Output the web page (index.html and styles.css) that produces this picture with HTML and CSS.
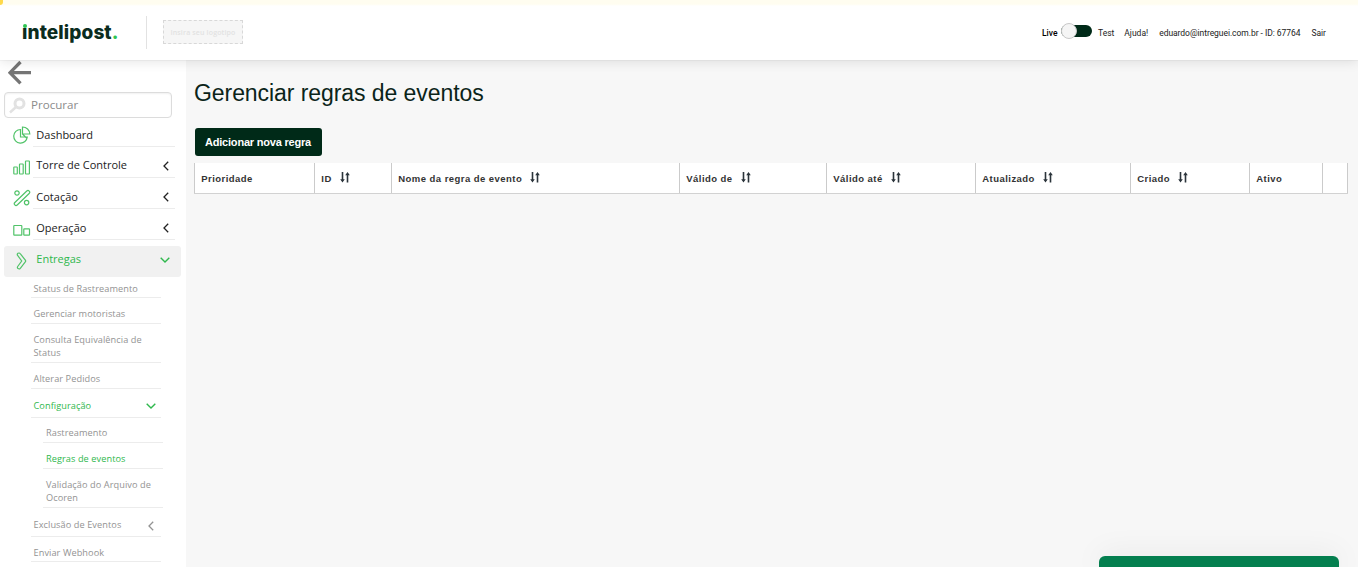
FILE: index.html
```html
<!DOCTYPE html>
<html lang="pt-BR">
<head>
<meta charset="utf-8">
<title>Intelipost - Regras de eventos</title>
<link rel="stylesheet" href="styles.css">
</head>
<body>
<svg class="defs" width="0" height="0">
  <symbol id="sort" viewBox="0 0 10 11"><path d="M2.500 0V8.500M7.500 10.500V2" fill="none" stroke="#2b343b" stroke-width="1.600"/><path d="M.2 7.300H4.800L2.500 10.400ZM5.200 3.200H9.800L7.500 .1Z" fill="#2b343b"/></symbol>
  <symbol id="left" viewBox="0 0 6 10"><path d="M5.200 .8 1 5l4.200 4.200" fill="none" stroke="currentColor" stroke-width="1.300"/></symbol>
  <symbol id="down" viewBox="0 0 10 6"><path d="M.7.7 5 5 9.300.7" fill="none" stroke="currentColor" stroke-width="1.400"/></symbol>
</svg>
<header class="header">
  <div class="logo"><i class="logo-i">ı<b></b></i>ntelipost<span>.</span></div>
  <div class="client-logo">Insira seu logotipo</div>
  <div class="account">
    <strong class="live">Live</strong>
    <div class="switch"><span></span></div>
    <span class="test">Test</span>
    <span class="help">Ajuda!</span>
    <span class="mail">eduardo@intreguei.com.br - ID: 67764</span>
    <span>Sair</span>
  </div>
</header>
<div class="layout">
  <aside class="sidebar">
    <svg class="back" viewBox="0 0 24 26"><path d="M23 12.700H2M12.500 2 2 12.700 12.500 23.400" fill="none" stroke="#757575" stroke-width="3.300"/></svg>
    <div class="search">
      <svg width="18" height="18" viewBox="0 0 18 18" fill="none" stroke="#e2e2e2"><circle cx="10.500" cy="7.500" r="4.500" stroke-width="3"/><path d="m7 11-6 5.500" stroke-width="2.400"/></svg>
      <span>Procurar</span>
    </div>
    <nav>
      <div class="item dash">
        <svg class="ico" viewBox="0 0 18 18"><path d="M7.500 3.500A6.800 6.800 0 1 0 14.300 11H7.500ZM9.500 1v7h7.300A7.200 7.200 0 0 0 9.500 1ZM9.500 8l4 4"/></svg>
        <span class="label">Dashboard</span>
      </div>
      <div class="item torre">
        <svg class="ico" viewBox="0 0 18 18"><rect x=".8" y="9" width="3.500" height="7" rx=".5"/><rect x="6.500" y="6" width="3.700" height="10" rx=".5"/><rect x="12.500" y="3" width="3.900" height="13" rx=".5"/></svg>
        <span class="label">Torre de Controle</span><svg class="left"><use href="#left"/></svg>
      </div>
      <div class="item cot">
        <svg class="ico" viewBox="0 0 18 18"><rect x="-1" y="7.300" width="20" height="3.400" rx="1.700" transform="rotate(-44 9 9)"/><circle cx="4" cy="4" r="2.200"/><circle cx="13.600" cy="13.600" r="2.200"/></svg>
        <span class="label">Cotação</span><svg class="left"><use href="#left"/></svg>
      </div>
      <div class="item oper">
        <svg class="ico" viewBox="0 0 18 18"><rect x=".8" y="4.500" width="8" height="9.700" rx=".5"/><rect x="10.800" y="7.800" width="5.700" height="6.400" rx=".5"/></svg>
        <span class="label">Operação</span><svg class="left"><use href="#left"/></svg>
      </div>
      <div class="item active">
        <svg class="ico" viewBox="0 0 18 18"><path d="M5 1.300c.9-.5 1.800-.3 2.400.5L12.300 8c.5.600.5 1.200 0 1.800l-5 6.500c-.6.700-1.500.8-2.300.3-.7-.6-.8-1.400-.3-2.100L8.700 9 4.600 3.400c-.5-.7-.4-1.500.4-2.100Z"/></svg>
        <span class="label">Entregas</span><svg class="down"><use href="#down"/></svg>
      </div>
      <div class="sub s1"><span>Status de Rastreamento</span></div>
      <div class="sub s2"><span>Gerenciar motoristas</span></div>
      <div class="sub s3"><span>Consulta Equivalência de<br>Status</span></div>
      <div class="sub s4"><span>Alterar Pedidos</span></div>
      <div class="sub s5 on"><span>Configuração</span><svg class="down"><use href="#down"/></svg></div>
      <div class="sub deep s6"><span>Rastreamento</span></div>
      <div class="sub deep s7 on"><span>Regras de eventos</span></div>
      <div class="sub deep s8"><span>Validação do Arquivo de<br>Ocoren</span></div>
      <div class="sub s9"><span>Exclusão de Eventos</span><svg class="left"><use href="#left"/></svg></div>
      <div class="sub s10"><span>Enviar Webhook</span></div>
    </nav>
  </aside>
  <main class="main">
    <h1>Gerenciar regras de eventos</h1>
    <button class="add">Adicionar nova regra</button>
    <div class="thead">
      <div>Prioridade</div>
      <div>ID<svg><use href="#sort"/></svg></div>
      <div>Nome da regra de evento<svg><use href="#sort"/></svg></div>
      <div>Válido de<svg><use href="#sort"/></svg></div>
      <div>Válido até<svg><use href="#sort"/></svg></div>
      <div>Atualizado<svg><use href="#sort"/></svg></div>
      <div>Criado<svg><use href="#sort"/></svg></div>
      <div>Ativo</div>
      <div></div>
    </div>
  </main>
</div>
<div class="chat"></div>
</body>
</html>
```
FILE: styles.css
```css
* { box-sizing: border-box; }
body { margin: 0; height: 567px; overflow: hidden; background: #f7f7f7; font-family: "Open Sans", sans-serif; }
.defs { position: absolute; }
.header {
  position: relative; z-index: 2; height: 60px; display: flex; align-items: flex-start;
  background: linear-gradient(#fffdf0 0 4px, #fff 6px);
  box-shadow: 0 1px 12px rgba(0,0,0,.12), 0 0 1px rgba(0,0,0,.2);
}
.header::before { content: ""; position: absolute; left: 0; top: 0; width: 3px; height: 5px; background: #ffd94a; border-bottom-right-radius: 3px; }
.logo {
  width: 125px; height: 33px; margin: 16px 0 0 22px; border-right: 1px solid #e2e2e2;
  font: 800 19px/33px Inter, sans-serif; letter-spacing: .1px; color: #0a2c20; white-space: nowrap;
}
.logo span { color: #2fc452; }
.logo-i { position: relative; font-style: normal; }
.logo-i b { position: absolute; left: 1px; top: 3px; width: 4px; height: 4px; border-radius: 2px; background: #2fc452; }
.client-logo {
  width: 80px; height: 24px; margin: 20px 0 0 16px; border: 1px dashed #d8d8d8; background: #f6f6f6;
  color: #e2e2e2; font: 600 7px/23px "Open Sans", sans-serif; letter-spacing: .15px; text-align: center; white-space: nowrap;
}
.account { margin: 21px 32px 0 auto; height: 24px; display: flex; align-items: center; font: 8.500px/24px Roboto, sans-serif; color: #222; white-space: nowrap; }
.account .live { font-weight: 500; color: #000; margin-right: 4px; }
.switch { width: 31px; height: 12px; margin: -4px 5.500px 0 0; border-radius: 6px; background: #002a18; }
.switch span { display: block; width: 16px; height: 16px; margin-top: -2px; border-radius: 50%; background: #f5f5f5; border: 1px solid #c9c9c9; }
.test { margin-right: 10px; }
.help { margin-right: 11px; }
.mail { margin-right: 11px; letter-spacing: -.05px; }
.layout { display: flex; height: 507px; }
.sidebar { width: 186px; background: #fff; overflow: hidden; }
.back { display: block; width: 24px; height: 26px; margin: 0 0 6px 8px; }
.search {
  width: 168px; height: 26px; margin-left: 4px; display: flex; align-items: center; gap: 4px; padding: 0 0 1px 4px;
  border: 1px solid #dcdcdc; border-radius: 4px; box-shadow: inset 0 1px 2px rgba(0,0,0,.06); font-size: 11.600px; color: #8b8b8b;
}
.item { position: relative; display: flex; height: 31px; padding-left: 13px; color: #222; }
.item::after { content: ""; position: absolute; left: 33px; width: 142px; bottom: 0; height: 1px; background: #ececec; }
.ico { width: 18px; height: 18px; fill: none; stroke: #51c369; stroke-width: 1.200; }
.label { margin-left: 5.300px; width: 126.700px; font-size: 11px; line-height: 20px; }
.left { width: 6px; height: 10px; }
.down { width: 10px; height: 6px; }
.dash { height: 29px; padding-top: 7px; }
.dash .ico { margin-top: 1px; }
.torre { padding-top: 8px; }
.torre .ico { margin-top: 3px; }
.cot { padding-top: 9px; }
.cot .ico { margin-top: 2px; }
.oper { padding-top: 9px; }
.oper .ico { margin-top: 3px; }
.torre .left { margin-top: 6px; }
.cot .left, .oper .left { margin-top: 5px; }
.active { height: 31px; width: 177px; margin: 6px 0 0 4px; padding: 3px 0 0 9px; background: #f1f1f1; border-radius: 3px; color: #2fb84d; }
.active::after { display: none; }
.active .ico { margin-top: 3px; }
.active .label { width: 123.700px; }
.active .down { margin-top: 8px; }
.sub { width: 130px; margin-left: 31px; padding-left: 2.500px; border-bottom: 1px solid #ececec; display: flex; justify-content: space-between; font-size: 9.200px; font-weight: 500; line-height: 13px; letter-spacing: .07px; color: #939393; white-space: nowrap; }
.deep { width: 120px; margin-left: 43px; padding-left: 3px; }
.on { color: #2fb84d; }
.s1 { height: 21px; padding-top: 5px; }
.s2 { height: 26px; padding-top: 9px; }
.s3 { height: 39px; padding-top: 9px; }
.s4 { height: 26px; padding-top: 9px; }
.s5 { height: 29px; padding-top: 10px; }
.s5 .down { margin: 4px 5px 0 0; }
.s6 { height: 25px; padding-top: 8px; }
.s7 { height: 26px; padding-top: 9px; }
.s8 { height: 39px; padding-top: 9px; }
.s9 { height: 29px; padding-top: 10px; }
.s9 .left { margin: 3px 7px 0 0; }
.s10 { height: 25px; padding-top: 9px; }
.main { width: 1172px; padding-left: 8px; }
h1 { margin: 18px 0 0; height: 50px; font: 400 23px/30px "Liberation Sans", Arial, sans-serif; letter-spacing: -.07px; color: #0b2419; }
.add { display: block; width: 127px; height: 28px; margin: 0 0 7px 1px; padding: 0 1px 0 0; border: 0; border-radius: 3px; background: #002a18; color: #fff; font: 700 11px/28px "Liberation Sans", Arial, sans-serif; letter-spacing: -.2px; }
.thead { width: 1154px; height: 31px; display: grid; grid-template-columns: 120px 77px 288px 147px 149px 155px 119px 73px 26px; background: #fff; border-bottom: 1px solid #d2d2d2; }
.thead div { display: flex; align-items: flex-start; padding: 9px 0 0 6.300px; border-left: 1px solid #cbcbcb; font: 700 9.500px/14px "Liberation Sans", Arial, sans-serif; letter-spacing: .45px; color: #333; white-space: nowrap; }
.thead div:last-child { border-right: 1px solid #cbcbcb; }
.thead svg { width: 10px; height: 11px; margin: -.500px 0 0 8px; }
.chat { position: absolute; z-index: 3; left: 1099px; top: 556px; width: 240px; height: 11px; background: #047f4f; border-radius: 6px 6px 0 0; box-shadow: 0 0 30px rgba(0,0,0,.1); }
```
